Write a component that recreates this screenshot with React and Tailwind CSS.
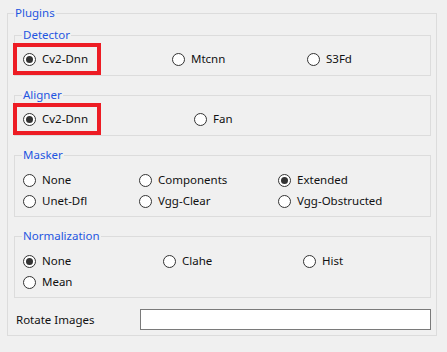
import React from "react";

const font = { fontFamily: '"Noto Sans", "Open Sans", sans-serif' };

function Radio({ label, checked }) {
  return (
    <div className="flex items-center gap-[6px] h-[16px]">
      <span className="w-[13px] h-[13px] rounded-full border border-[#333333] bg-white flex items-center justify-center shrink-0">
        {checked && <span className="w-[7px] h-[7px] rounded-full bg-[#333333]" />}
      </span>
      <span className="text-[11.5px] leading-[16px] text-[#111111] whitespace-nowrap">{label}</span>
    </div>
  );
}

function Group({ title, cols, rows, className = "", pt = "pt-[8px]", pb = "pb-[8px]", gap = "gap-y-[5px]" }) {
  return (
    <fieldset className={`border border-[#dcdcdc] ml-[6px] w-[417px] ${className}`}>
      <legend className="ml-[7px] px-[1px] text-[11.5px] leading-[16px] text-[#1f56e0]">{title}</legend>
      <div className={`grid ${cols} ${gap} pl-[8px] ${pt} ${pb}`}>
        {rows.map((r, i) => (
          <Radio key={i} label={r.l} checked={r.c} />
        ))}
      </div>
    </fieldset>
  );
}

export default function App() {
  return (
    <div className="relative w-[447px] h-[352px] bg-[#f0f0f0] overflow-hidden" style={font}>
      <fieldset className="border border-[#dcdcdc] ml-[7px] mt-[5px] w-[430px]">
        <legend className="ml-[6px] px-[1px] text-[11.5px] leading-[16px] text-[#1f56e0]">Plugins</legend>
        <Group
          title="Detector"
          className="mt-[6px]"
          cols="grid-cols-[149px_135px_1fr]"
          rows={[{ l: "Cv2-Dnn", c: true }, { l: "Mtcnn" }, { l: "S3Fd" }]}
        />
        <Group
          title="Aligner"
          className="mt-[11px]"
          cols="grid-cols-[171px_1fr]"
          rows={[{ l: "Cv2-Dnn", c: true }, { l: "Fan" }]}
        />
        <Group
          title="Masker"
          className="mt-[11px]"
          pt="pt-[9px]"
          pb="pb-[7px]"
          cols="grid-cols-[116px_139px_1fr]"
          rows={[
            { l: "None" },
            { l: "Components" },
            { l: "Extended", c: true },
            { l: "Unet-Dfl" },
            { l: "Vgg-Clear" },
            { l: "Vgg-Obstructed" },
          ]}
        />
        <Group
          title="Normalization"
          className="mt-[11px]"
          pt="pt-[9px]"
          pb="pb-[7px]"
          cols="grid-cols-[140px_140px_1fr]"
          rows={[{ l: "None", c: true }, { l: "Clahe" }, { l: "Hist" }, { l: "Mean" }]}
        />
        <div className="flex items-center mt-[11px] mb-[5px] ml-[8px]">
          <span className="w-[124px] text-[11.5px] leading-[16px] text-[#111111]">Rotate Images</span>
          <div className="w-[291px] h-[21px] border border-[#7a7a7a] bg-white" />
        </div>
      </fieldset>
      <div className="absolute left-[13px] top-[43px] w-[88px] h-[32px] border-4 border-[#ed1c24]" />
      <div className="absolute left-[13px] top-[103px] w-[88px] h-[32px] border-4 border-[#ed1c24]" />
    </div>
  );
}
